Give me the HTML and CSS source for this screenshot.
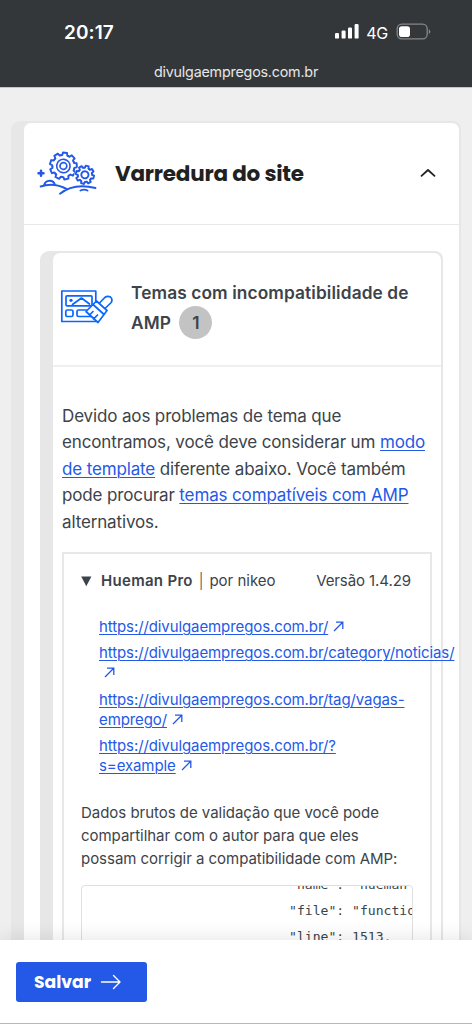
FILE: index.html
```html
<!DOCTYPE html>
<html lang="pt-BR">
<head>
<meta charset="utf-8">
<title>Varredura do site</title>
<link rel="stylesheet" href="styles.css">
</head>
<body>
<header class="browser">
  <div class="status">
    <span class="clock">20:17</span>
    <span class="signals">
      <svg width="26" height="18" viewBox="0 0 26 18" fill="#fff"><rect x="1" y="10" width="4" height="5.6" rx="1.2"/><rect x="7.6" y="7.6" width="4" height="8" rx="1.2"/><rect x="14" y="4.4" width="4" height="11.2" rx="1.2"/><rect x="20.6" y="1" width="4" height="14.6" rx="1.2"/></svg>
      <span class="network">4G</span>
      <svg width="36" height="18" viewBox="0 0 36 18"><rect x="1.2" y="1.2" width="30" height="14.6" rx="4.6" fill="none" stroke="#858789" stroke-width="1.3"/><rect x="3" y="3.2" width="11" height="10.8" rx="2.8" fill="#fff"/><path d="M32.8 6.2v4.8q1.6-.8 1.6-2.4t-1.6-2.4z" fill="#858789"/></svg>
    </span>
  </div>
  <div class="address"><span>divulgaempregos.com.br</span></div>
</header>
<main class="page">
  <section class="card card-outer">
    <div class="panel">
      <div class="scan-head">
        <svg class="scan-icon" width="60" height="46" viewBox="0 0 60 46" fill="none" stroke="#2459e7" stroke-width="1.9" stroke-linecap="round" stroke-linejoin="round">
          <defs>
            <path id="tooth" d="M-3.8-10.4L-2.5-10.8L-2.1-13.4H2.1L2.5-10.8L3.8-10.4"/>
            <path id="cog" d="M-2.8-6.6L-1.8-6.9L-1.5-9.1H1.5L1.8-6.9L2.8-6.6"/>
          </defs>
          <g transform="translate(26.4 16) rotate(7)">
            <use href="#tooth"/><use href="#tooth" transform="rotate(40)"/><use href="#tooth" transform="rotate(80)"/><use href="#tooth" transform="rotate(120)"/><use href="#tooth" transform="rotate(160)"/><use href="#tooth" transform="rotate(200)"/><use href="#tooth" transform="rotate(240)"/><use href="#tooth" transform="rotate(280)"/><use href="#tooth" transform="rotate(320)"/>
            <circle r="6.7" stroke-width="1.6"/><circle r="3.4" stroke-width="1.7"/>
          </g>
          <g transform="translate(47.9 24.8) rotate(15)">
            <circle r="10.4" fill="#fff" stroke="none"/>
            <use href="#cog"/><use href="#cog" transform="rotate(45)"/><use href="#cog" transform="rotate(90)"/><use href="#cog" transform="rotate(135)"/><use href="#cog" transform="rotate(180)"/><use href="#cog" transform="rotate(225)"/><use href="#cog" transform="rotate(270)"/><use href="#cog" transform="rotate(315)"/>
            <circle r="3.6"/>
          </g>
          <path d="M4 20.8v5M1.5 23.3h5" stroke-width="2.5"/>
          <path d="M3.6 36.5Q17 32 30 39.2M7 35.2C8.5 29.5 16.500 29 18 35M23 43.700Q37 32.500 58.500 38M43.500 40.500Q47 38.800 50.500 40.500"/>
        </svg>
        <h1>Varredura do site</h1>
        <svg class="chevron" width="16" height="10" viewBox="0 0 16 10" fill="none" stroke="#212121" stroke-width="1.8" stroke-linecap="round" stroke-linejoin="round"><path d="M1.500 7.800L8 2L14.500 7.800"/></svg>
      </div>
      <div class="scan-body">
        <section class="card card-inner">
          <div class="panel">
            <div class="theme-head">
              <svg class="theme-icon" width="54" height="38" viewBox="0 0 54 38" fill="none" stroke="#0b66ff" stroke-width="1.7" stroke-linejoin="round" stroke-linecap="round">
                <path d="M1.800 3h34v30.500h-34zM7 7.800h24q1 0 1 1v8q0 1-1 1H7q-1 0-1-1v-8q0-1 1-1zM12.500 16.500l9-6.500 8 6"/>
                <circle cx="11" cy="12.300" r="1.600" fill="#0b66ff" stroke="none"/>
                <rect x="5.800" y="22" width="7.200" height="6.500" rx="1.600"/><rect x="17" y="22" width="16" height="6.500" rx="1.600"/>
                <path d="M25.500 23L37.500 12L46.500 21L38 34.500Z" fill="#fff" stroke="none"/>
                <path d="M39 15.500L44.800 9.500Q47.500 7.500 50.500 9Q53 11.500 51.200 14.500L45 20.500" fill="#fff"/>
                <path d="M36.500 13L47 22.500L38 34.500L26 23.500ZM33 16.500L43.500 26M29.500 27L33 23.500M33.500 31L37.500 27" fill="#fff"/>
              </svg>
              <h2>Temas com incompatibilidade de<br>AMP <span class="count">1</span></h2>
            </div>
            <div class="theme-body">
              <p class="intro">Devido aos problemas de tema que<br>encontramos, você deve considerar um <a>modo</a><br><a>de template</a> diferente abaixo. Você também<br>pode procurar <a>temas compatíveis com AMP</a><br>alternativos.</p>
              <div class="details">
                <div class="summary">
                  <svg width="11" height="11" viewBox="0 0 11 11"><path d="M.2.500h10.200L5.300 10.300z" fill="#3c434a"/></svg>
                  <strong>Hueman Pro</strong><span class="bar">|</span><span class="author">por nikeo</span><span class="version">Versão 1.4.29</span>
                </div>
                <ul class="urls">
                  <li><a>https://divulgaempregos.com.br/</a><svg class="ext" viewBox="0 0 11 11"><path d="M1 10L9.700 1.300M3 1.200h6.800V8"/></svg></li>
                  <li><a>https://divulgaempregos.com.br/category/noticias/</a><br><svg class="ext" viewBox="0 0 11 11"><path d="M1 10L9.700 1.300M3 1.200h6.800V8"/></svg></li>
                  <li><a>https://divulgaempregos.com.br/tag/vagas-<br>emprego/</a><svg class="ext" viewBox="0 0 11 11"><path d="M1 10L9.700 1.300M3 1.200h6.800V8"/></svg></li>
                  <li><a>https://divulgaempregos.com.br/?<br>s=example</a><svg class="ext" viewBox="0 0 11 11"><path d="M1 10L9.700 1.300M3 1.200h6.800V8"/></svg></li>
                </ul>
                <p class="raw">Dados brutos de validação que você pode<br>compartilhar com o autor para que eles<br>possam corrigir a compatibilidade com AMP:</p>
                <pre class="code"><code>"name": "hueman-pro",
"file": "functions.php",
"line": 1513,</code></pre>
              </div>
            </div>
          </div>
        </section>
      </div>
    </div>
  </section>
</main>
<footer class="actions">
  <button class="save"><span>Salvar</span><svg width="22" height="16" viewBox="0 0 22 16" fill="none" stroke="#fff" stroke-width="1.400" stroke-linecap="round" stroke-linejoin="round"><path d="M1.500 8h18.500M13.500 1.500L20 8l-6.500 6.500"/></svg></button>
</footer>
</body>
</html>
```
FILE: styles.css
```css
* { box-sizing: border-box; }
body {
  margin: 0;
  width: 472px;
  height: 1024px;
  display: flex;
  flex-direction: column;
  overflow: hidden;
  background: #efefef;
  color: #3c434a;
  font-family: Inter, "Liberation Sans", sans-serif;
  white-space: nowrap;
}
h1, h2, p, ul { margin: 0; padding: 0; }
svg { flex: none; display: block; }
a { color: #2459e7; text-decoration: underline; text-decoration-thickness: 1px; text-underline-offset: 2px; }

.browser { flex: none; height: 88px; background: #343739; color: #fff; border-bottom: 1px solid #c4c5c5; }
.status { height: 60px; padding: 20px 40px 0 64px; display: flex; justify-content: space-between; align-items: flex-start; }
.clock { font-size: 19px; line-height: 25px; font-weight: 600; letter-spacing: 0.1px; }
.signals { display: flex; align-items: flex-start; padding-top: 3px; }
.network { font-size: 16px; line-height: 20px; margin: 0 8px 0 6px; letter-spacing: -0.3px; }
.address { font-size: 14.3px; line-height: 24px; text-align: center; color: #e6e6e6; letter-spacing: -0.2px; }

.page { flex: 1; min-height: 0; overflow: hidden; padding: 33px 11px 0; }
.card { background: #e7e7e7; border-radius: 9px 8px 0 0; padding: 2px 2px 0 13px; }
.panel { background: #fff; border-radius: 7px 7px 0 0; }
.scan-head { display: flex; align-items: center; height: 102px; padding: 0 23px 0 13px; border-bottom: 1px solid #e8e8e8; }
.scan-icon { margin-top: -1px; }
h1 { font-family: Poppins, Inter, sans-serif; font-size: 21.5px; line-height: 30px; font-weight: 700; color: #212121; margin-left: 18px; letter-spacing: -0.22px; }
.chevron { margin-left: auto; margin-top: -2px; }
.scan-body { padding: 26px 16px 0; }
.card-inner { padding-top: 2px; }
.theme-head { display: flex; height: 114px; padding: 25px 0 0 7px; border-bottom: 2px solid #efefef; }
.theme-icon { margin-top: 10px; }
h2 { font-size: 17.3px; line-height: 30px; font-weight: 600; margin-left: 17px; letter-spacing: 0.11px; }
.count { display: inline-block; width: 33px; height: 33px; border-radius: 50%; background: #c3c3c3; line-height: 33px; text-align: center; margin: -2px 0 0 4px; }
.theme-body { padding: 36px 9px 0; }
.intro { font-size: 17px; line-height: 26.4px; letter-spacing: -0.14px; }
.details { margin-top: 17px; border: 2px solid #e8e8e8; border-bottom: 0; height: 420px; padding: 15px 18px 0 17px; font-size: 15px; }
.summary { display: flex; align-items: center; line-height: 24px; }
.summary strong { margin-left: 9px; font-weight: 600; letter-spacing: 0.3px; }
.bar { margin: 0 6px 0 6px; font-weight: 300; }
.version { margin-left: auto; margin-right: 1px; letter-spacing: -0.08px; }
.urls { list-style: none; padding: 24px 0 0 18px; line-height: 20px; letter-spacing: -0.1px; }
.urls li { margin-bottom: 6.3px; }
.ext { display: inline-block; width: 11px; height: 11px; margin-left: 5px; fill: none; stroke: #2459e7; stroke-width: 1.3; }
.raw { margin-top: 25px; line-height: 23px; letter-spacing: -0.03px; }
.code { margin: 15px 0 0; width: 332px; height: 100px; overflow: hidden; border: 1px solid #dfdfdf; border-radius: 4px; padding-left: 207px; }
.code code { display: block; margin-top: -13.5px; font: 13.1px/25.6px "DejaVu Sans Mono", monospace; }

.actions { position: relative; flex: none; height: 84px; background: #fff; border-bottom: 1px solid #b8b8b8; padding: 22px 16px; box-shadow: 0 -2px 18px rgba(0, 0, 0, .1); }
.save { display: flex; align-items: center; width: 131px; height: 40px; padding: 0 0 0 18px; border: 0; border-radius: 3px; background: #2459e7; color: #fff; font: 700 17.2px/24px Poppins, Inter, sans-serif; }
.save svg { margin-left: 9px; }
```
